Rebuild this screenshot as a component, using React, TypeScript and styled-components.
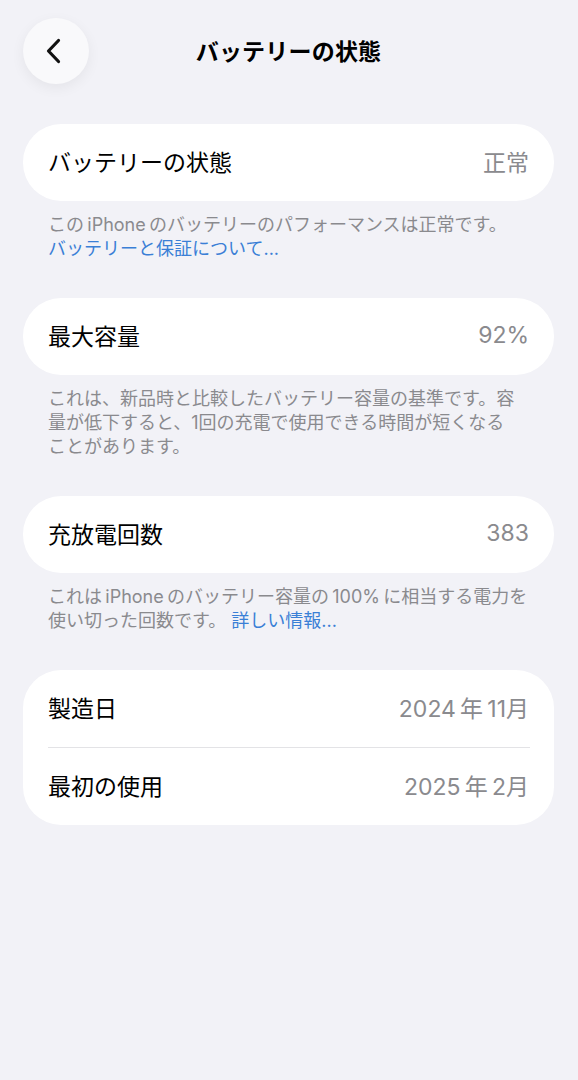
import { createGlobalStyle, styled } from 'styled-components';

const GlobalStyle = createGlobalStyle`
  html, body {
    margin: 0;
    padding: 0;
    background: #f2f2f7;
  }
  body {
    font-family: Inter, "Noto Sans CJK JP", sans-serif;
    color: #000;
    -webkit-font-smoothing: antialiased;
  }
`;

const Page = styled.div`
  min-height: 1080px;
  padding: 18px 24px 0 23px;
  box-sizing: border-box;
`;

const Header = styled.header`
  position: relative;
  display: flex;
  align-items: center;
  justify-content: center;
  height: 66px;
  margin-bottom: 40px;
`;

const BackButton = styled.button`
  position: absolute;
  left: 0;
  top: 0;
  width: 66px;
  height: 66px;
  border: none;
  border-radius: 50%;
  background: #f9f9fb;
  box-shadow: 0 4px 14px rgba(0, 0, 0, 0.06);
  display: flex;
  align-items: center;
  justify-content: center;
  padding: 0 4px 0 0;
  cursor: pointer;
`;

const Title = styled.h1`
  margin: 0 0 3px;
  font-size: 23px;
  font-weight: 700;
  letter-spacing: 0.2px;
`;

const Section = styled.section`
  margin-bottom: 37px;
`;

const Card = styled.div`
  background: #fff;
  border-radius: 38px;
  overflow: hidden;
`;

const Row = styled.div`
  display: flex;
  align-items: center;
  justify-content: space-between;
  height: 77px;
  padding: 0 25px 4px;
  box-sizing: border-box;
  font-size: 23px;
`;

const Divider = styled.div`
  height: 1px;
  background: #e3e3e6;
  margin: 0 24px 0 25px;
`;

const Label = styled.span`
  color: #000;
`;

const Value = styled.span`
  color: #8a8a8e;
`;

const Footer = styled.p`
  margin: 12px 0 0;
  padding: 0 20px 0 25px;
  font-size: 18px;
  line-height: 24px;
  color: #8a8a8e;
`;

const Link = styled.a`
  color: #3a7fd6;
  text-decoration: none;
`;

const Chevron = () => (
  <svg width="20" height="30" viewBox="0 0 20 30" fill="none">
    <path
      d="M14.5 4.5 L4.5 15 L14.5 25.5"
      stroke="#111"
      strokeWidth="3.2"
      strokeLinecap="round"
      strokeLinejoin="round"
    />
  </svg>
);

const App = () => {
  return (
    <>
      <GlobalStyle />
      <Page>
        <Header>
          <BackButton aria-label="戻る">
            <Chevron />
          </BackButton>
          <Title>バッテリーの状態</Title>
        </Header>

        <Section>
          <Card>
            <Row>
              <Label>バッテリーの状態</Label>
              <Value>正常</Value>
            </Row>
          </Card>
          <Footer>
            この{'\u2009'}iPhone{'\u2009'}のバッテリーのパフォーマンスは正常です。
            <br />
            <Link href="#">バッテリーと保証について...</Link>
          </Footer>
        </Section>

        <Section>
          <Card>
            <Row>
              <Label>最大容量</Label>
              <Value>92%</Value>
            </Row>
          </Card>
          <Footer>
            これは、新品時と比較したバッテリー容量の基準です。容
            <br />
            量が低下すると、1回の充電で使用できる時間が短くなる
            <br />
            ことがあります。
          </Footer>
        </Section>

        <Section>
          <Card>
            <Row>
              <Label>充放電回数</Label>
              <Value>383</Value>
            </Row>
          </Card>
          <Footer>
            これは{'\u2009'}iPhone{'\u2009'}のバッテリー容量の{'\u2009'}100%{'\u2009'}に相当する電力を
            <br />
            使い切った回数です。 <Link href="#">詳しい情報...</Link>
          </Footer>
        </Section>

        <Section>
          <Card>
            <Row>
              <Label>製造日</Label>
              <Value>2024{'\u2009'}年{'\u2009'}11月</Value>
            </Row>
            <Divider />
            <Row>
              <Label>最初の使用</Label>
              <Value>2025{'\u2009'}年{'\u2009'}2月</Value>
            </Row>
          </Card>
        </Section>
      </Page>
    </>
  );
};

export default App;
